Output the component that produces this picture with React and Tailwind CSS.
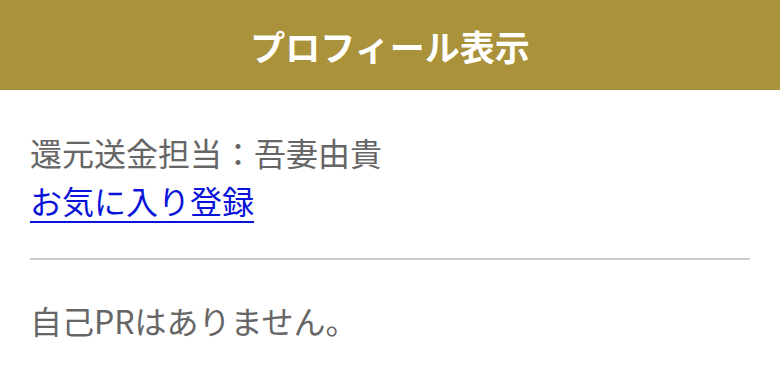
import React from 'react';

const jp = { fontFamily: '"Noto Sans CJK JP", "Noto Sans", sans-serif' };

export default function App() {
    return (
        <div className="w-[780px] h-[368px] bg-white overflow-hidden" style={jp}>
            {/* ヘッダー */}
            <header className="h-[90px] bg-[#aa923a] flex items-center justify-center">
                <h1 className="text-[35px] font-bold text-white leading-none">プロフィール表示</h1>
            </header>

            <main className="px-[30px] pt-[38px]">
                <p className="text-[32px] leading-[48px] text-[#666666]">還元送金担当：吾妻由貴</p>
                <a href="#" className="block w-fit text-[32px] leading-[48px] text-[#0a14d8] underline underline-offset-[7px] decoration-2">
                    お気に入り登録
                </a>
                <hr className="mt-[34px] border-0 h-[2px] bg-[#cccccc]" />
                <p className="mt-[36px] text-[32px] leading-[48px] text-[#666666]">自己PRはありません。</p>
            </main>
        </div>
    );
}
